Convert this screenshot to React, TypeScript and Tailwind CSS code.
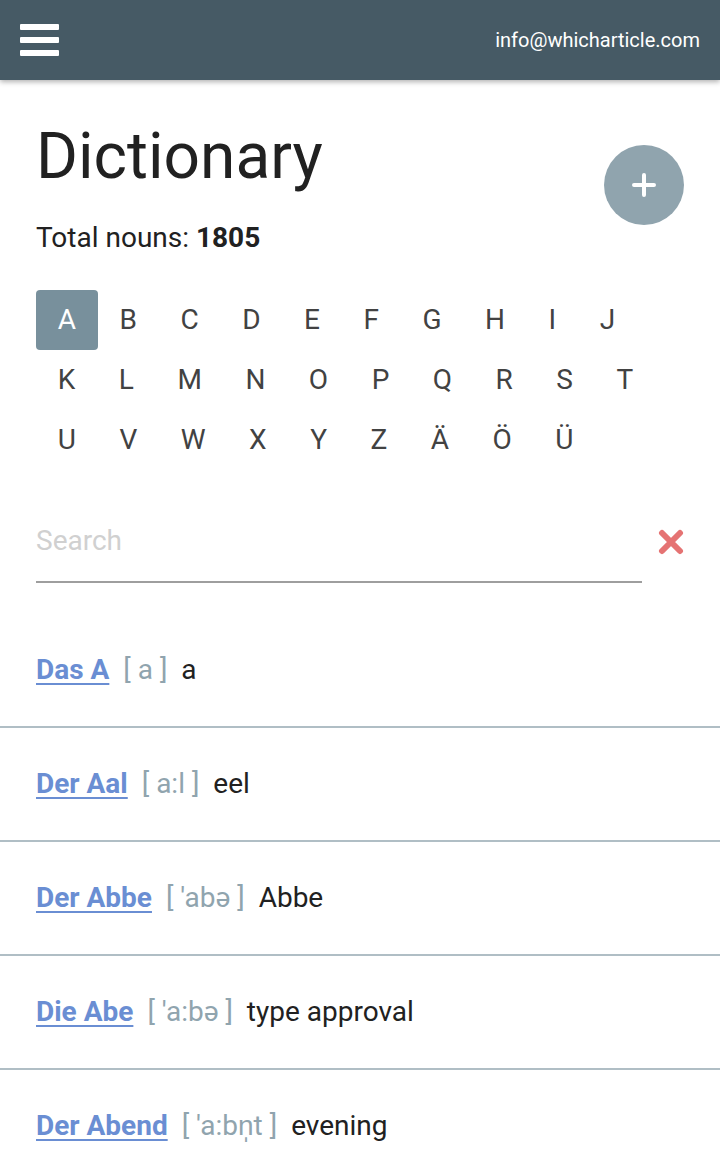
import React from "react";

const rows = ["ABCDEFGHIJ", "KLMNOPQRST", "UVWXYZÄÖÜ"];

const nouns = [
  { word: "Das A", ipa: "a", meaning: "a" },
  { word: "Der Aal", ipa: "a:l", meaning: "eel" },
  { word: "Der Abbe", ipa: "'abə", meaning: "Abbe" },
  { word: "Die Abe", ipa: "'a:bə", meaning: "type approval" },
  { word: "Der Abend", ipa: "'a:bn̩t", meaning: "evening" },
];

export default function App() {
  return (
    <div className="h-[1160px] overflow-hidden bg-white font-['Roboto',sans-serif] text-[#212121]">
      {/* Top bar */}
      <header className="relative z-10 flex h-[80px] items-center justify-between bg-[#465a65] pl-[20px] pr-[20px] shadow-[0_2px_5px_rgba(0,0,0,0.3)]">
        <button className="flex flex-col gap-[7px]">
          <span className="block h-[6px] w-[39px] rounded-[1px] bg-white" />
          <span className="block h-[6px] w-[39px] rounded-[1px] bg-white" />
          <span className="block h-[6px] w-[39px] rounded-[1px] bg-white" />
        </button>
        <span className="text-[20px] text-white">info@whicharticle.com</span>
      </header>

      <main className="px-[36px] pt-[38px]">
        {/* Title + add button */}
        <div className="flex items-start justify-between">
          <div>
            <h1 className="text-[64px] leading-[77px] font-normal text-[#212121]">Dictionary</h1>
            <p className="mt-[26px] text-[28px] leading-[33px]">
              Total nouns: <span className="font-bold">1805</span>
            </p>
          </div>
          <button className="mt-[27px] flex h-[80px] w-[80px] items-center justify-center rounded-full bg-[#90a4ae]">
            <svg width="26" height="26" viewBox="0 0 26 26">
              <path d="M13 3v20M3 13h20" stroke="white" strokeWidth="4" strokeLinecap="round" />
            </svg>
          </button>
        </div>

        {/* Alphabet */}
        <div className="mt-[36px] flex flex-col">
          {rows.map((row) => (
            <div key={row} className="flex">
              {row.split("").map((l) => (
                <button
                  key={l}
                  className={
                    l === "A"
                      ? "h-[60px] rounded-[4px] bg-[#78909c] px-[21.75px] text-[28px] leading-[60px] text-white"
                      : "h-[60px] px-[21.75px] text-[28px] leading-[60px] text-[#424242]"
                  }
                >
                  {l}
                </button>
              ))}
            </div>
          ))}
        </div>

        {/* Search */}
        <div className="mt-[52px] flex items-center">
          <input
            placeholder="Search"
            className="h-[61px] w-[607px] border-b-2 border-[#9e9e9e] bg-transparent pb-[22px] pt-[0px] text-[28px] text-[#212121] outline-none placeholder:text-[#d0d0d0]"
          />
          <button className="ml-[16px] -mt-[21px]">
            <svg width="26" height="26" viewBox="0 0 26 26">
              <path d="M4 4l18 18M22 4L4 22" stroke="#e57373" strokeWidth="6" strokeLinecap="round" />
            </svg>
          </button>
        </div>
      </main>

      {/* Noun list */}
      <ul className="mt-[31px]">
        {nouns.map((n) => (
          <li key={n.word} className="flex h-[114px] items-center border-b-2 border-[#b0bec5] px-[36px] text-[28px]">
            <a href="#" className="font-bold text-[#6a8ed3] underline underline-offset-[4px]">
              {n.word}
            </a>
            <span className="ml-[14px] text-[#90a4ae]">[ {n.ipa} ]</span>
            <span className="ml-[14px] text-[#212121]">{n.meaning}</span>
          </li>
        ))}
      </ul>
    </div>
  );
}
